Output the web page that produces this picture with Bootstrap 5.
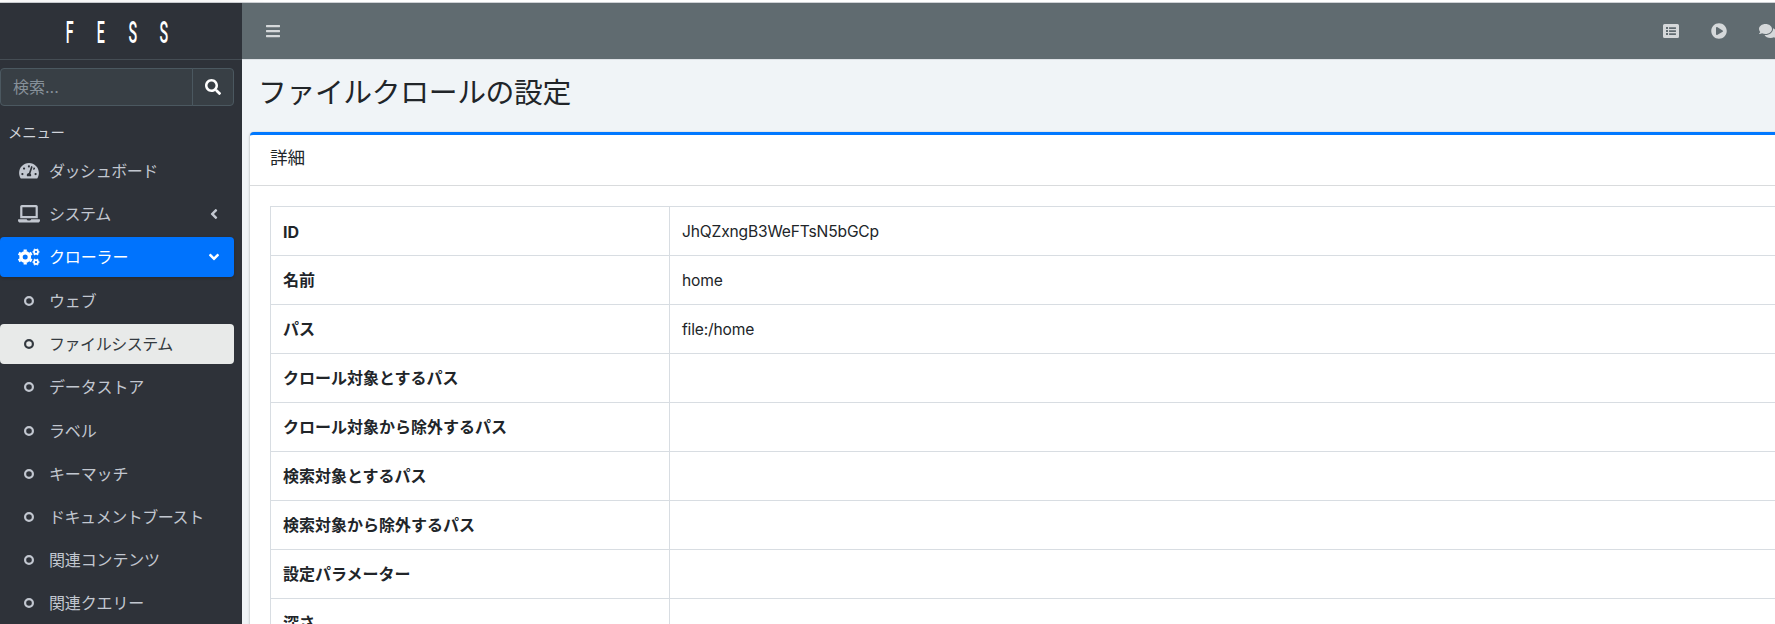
<!DOCTYPE html>
<html lang="ja">
<head>
<meta charset="utf-8">
<title>Fess</title>
<link rel="stylesheet" href="https://cdn.jsdelivr.net/npm/bootstrap@5.3.0/dist/css/bootstrap.min.css">
<style>
body{font-family:Inter,"Noto Sans CJK JP",sans-serif;font-size:16px;line-height:24px;color:#212529;background:#fff;overflow:hidden}
.app{height:624px;padding-top:2px;overflow:hidden}
.app-frame{border-top:1px solid #cfd2d6;height:622px}
.side{width:242px;background:#2e3239;color:#c2c7d0;flex:none;box-shadow:0 14px 28px rgba(0,0,0,.25)}
.brand-row{height:57px;border-bottom:1px solid #454d54;padding-left:53.5px;color:#fff}
.brand-row span{width:31.6px;text-align:center;font:500 31px/60px Roboto,sans-serif;transform:scaleX(.46)}
.search-box{width:234px;height:38px;margin-top:8px}
.search-box .form-control,.search-box .btn{background:#383f45;border-color:#4b5860;color:#fff;border-radius:4px}
.search-box .form-control{border-radius:4px 0 0 4px;padding:6px 12px}
.search-box .form-control::placeholder{color:#869099;opacity:1}
.search-box .btn{width:42px;padding:0;border-radius:0 4px 4px 0}
.menu-label{font-size:14.4px;letter-spacing:-.2px;padding:15px 8px 5.6px;color:#d0d4db}
.menu-list .nav-link{width:234px;height:40px;margin-bottom:3.2px;padding:8px 0 8px 16px;color:#c2c7d0;border-radius:4px;white-space:nowrap;letter-spacing:-.15px}
.menu-list .tight{letter-spacing:-.45px}
.menu-list .nav-link.active{background:#0073fd;color:#fff;box-shadow:0 1px 3px rgba(0,0,0,.2);margin-bottom:4px}
.menu-list .nav-link.picked{background:#e8eae9;color:#343a40}
.ico{width:25.6px;margin-right:7.4px;display:flex;justify-content:center;align-items:center}
.caret-ico{margin-right:16px}
.caret-open{transform:rotate(-90deg)}
svg{fill:currentColor;display:block}
.page{background:#f0f4f7;min-width:0}
.topbar{height:57px;background:#606b70;border-bottom:1px solid #dee2e6;color:#d5d8da;padding:0 0 0 24px}
.topbar .tools{width:112px;gap:32px}
h1{font-size:28.8px;line-height:34px;margin:15.5px 0 0 16px;font-weight:400;letter-spacing:-.35px}
.detail{margin:22.5px 0 0 8px;width:1644px;border:0;border-top:3px solid #0078ff;border-radius:4px;box-shadow:0 0 1px rgba(0,0,0,.2),0 1px 3px rgba(0,0,0,.25)}
.detail .card-header{background:#fff;border-bottom:1px solid #d9dbdd;height:51px;padding:11px 20px 9px;font-size:17.6px}
.detail .card-body{padding:20px}
.detail table{table-layout:fixed;width:1604px;border-color:#d8dde2;color:#212529}
.detail th,.detail td{padding:12px;height:49px}
.detail th{width:399px}
.detail .latin{padding-top:13px;padding-bottom:11px}
.detail td{font-size:15.6px;letter-spacing:-.17px}
</style>
</head>
<body>
<svg width="0" height="0" class="position-absolute">
<symbol id="angle" viewBox="0 0 256 512"><path d="M31.7 239l136-136c9.4-9.4 24.6-9.4 33.9 0l22.6 22.6c9.4 9.4 9.4 24.6 0 33.9L127.9 256l96.4 96.4c9.4 9.4 9.4 24.6 0 33.9L201.7 409c-9.4 9.4-24.6 9.4-33.9 0l-136-136c-9.5-9.4-9.5-24.6-.1-34z"/></symbol>
<symbol id="ring" viewBox="0 0 12 12"><circle cx="6" cy="6" r="3.9" fill="none" stroke="currentColor" stroke-width="2.2"/></symbol>
</svg>
<div class="app"><div class="app-frame d-flex">
<aside class="side">
  <div class="brand-row d-flex"><span>F</span><span>E</span><span>S</span><span>S</span></div>
  <div class="input-group search-box">
    <input class="form-control" placeholder="検索...">
    <button class="btn d-flex align-items-center justify-content-center"><svg width="16" height="16" viewBox="0 0 512 512"><path d="M505 442.7L405.3 343c-4.5-4.5-10.6-7-17-7H372c27.6-35.3 44-79.7 44-128C416 93.1 322.9 0 208 0S0 93.1 0 208s93.1 208 208 208c48.3 0 92.7-16.4 128-44v16.3c0 6.4 2.5 12.5 7 17l99.7 99.7c9.4 9.4 24.6 9.4 33.9 0l28.3-28.3c9.4-9.4 9.4-24.6.1-34zM208 336c-70.7 0-128-57.2-128-128 0-70.7 57.2-128 128-128 70.7 0 128 57.2 128 128 0 70.7-57.2 128-128 128z"/></svg></button>
  </div>
  <div class="menu-label">メニュー</div>
  <nav class="nav flex-column menu-list">
    <a class="nav-link tight d-flex align-items-center"><span class="ico"><svg width="20" height="17.6" viewBox="0 0 576 512"><path d="M288 32C128.94 32 0 160.94 0 320c0 52.8 14.25 102.26 39.06 144.8 5.61 9.62 16.3 15.2 27.44 15.2h443c11.14 0 21.83-5.58 27.44-15.2C561.75 422.26 576 372.8 576 320c0-159.06-128.94-288-288-288zm0 64c14.71 0 26.58 10.13 30.32 23.65-1.11 2.26-2.64 4.23-3.45 6.67l-9.22 27.67c-5.13 3.49-10.97 6.01-17.64 6.01-17.67 0-32-14.33-32-32S270.33 96 288 96zM96 384c-17.67 0-32-14.33-32-32s14.33-32 32-32 32 14.33 32 32-14.33 32-32 32zm48-160c-17.67 0-32-14.33-32-32s14.33-32 32-32 32 14.33 32 32-14.33 32-32 32zm246.77-72.41l-61.33 184C343.13 347.33 352 364.54 352 384c0 11.72-3.38 22.55-8.88 32H232.88c-5.5-9.45-8.88-20.28-8.88-32 0-33.94 26.5-61.43 59.9-63.59l61.34-184.01c4.17-12.56 17.73-19.45 30.36-15.17 12.57 4.19 19.35 17.79 15.17 30.36zm14.66 57.2l15.52-46.55c3.47-1.29 7.13-2.23 11.05-2.23 17.67 0 32 14.33 32 32s-14.33 32-32 32c-11.38-.01-20.89-6.28-26.57-15.22zM480 384c-17.67 0-32-14.33-32-32s14.33-32 32-32 32 14.33 32 32-14.33 32-32 32z"/></svg></span>ダッシュボード</a>
    <a class="nav-link tight d-flex align-items-center"><span class="ico"><svg width="22" height="17.6" viewBox="0 0 640 512"><path d="M624 416H381.54c-.74 19.81-14.71 32-32.74 32H288c-18.69 0-33.02-17.47-32.77-32H16c-8.8 0-16 7.2-16 16v16c0 35.2 28.8 64 64 64h512c35.2 0 64-28.8 64-64v-16c0-8.8-7.2-16-16-16zM576 48c0-26.4-21.6-48-48-48H112C85.6 0 64 21.6 64 48v336h512V48zm-64 272H128V64h384v256z"/></svg></span><span class="flex-grow-1">システム</span><svg class="caret-ico" width="8" height="16"><use href="#angle"/></svg></a>
    <a class="nav-link active d-flex align-items-center"><span class="ico"><svg width="22" height="18" viewBox="0 0 22 18" fill="none" stroke="currentColor">
      <g fill="none"><circle cx="7.2" cy="9" r="4.2" stroke-width="3.4"/><path stroke-width="3.2" d="M7.2 1.5v2M7.2 14.5v2M.7 5.25l1.8 1M11.9 11.75l1.8 1M.7 12.75l1.8-1M11.9 6.25l1.8-1"/>
      <circle cx="18" cy="3.9" r="2" stroke-width="1.7"/><path stroke-width="1.6" d="M14.6 3.9h1M20.4 3.9h1M16.2.8l.5.9M19.8.8l-.5.9M16.2 7l.5-.9M19.8 7l-.5-.9"/>
      <circle cx="18" cy="14.1" r="2" stroke-width="1.7"/><path stroke-width="1.6" d="M14.6 14.1h1M20.4 14.1h1M16.2 11l.5.9M19.8 11l-.5.9M16.2 17.2l.5-.9M19.8 17.2l-.5-.9"/></g></svg></span><span class="flex-grow-1">クローラー</span><svg class="caret-ico caret-open" width="8" height="16"><use href="#angle"/></svg></a>
    <a class="nav-link d-flex align-items-center"><span class="ico"><svg width="12" height="12"><use href="#ring"/></svg></span>ウェブ</a>
    <a class="nav-link picked tight d-flex align-items-center"><span class="ico"><svg width="12" height="12"><use href="#ring"/></svg></span>ファイルシステム</a>
    <a class="nav-link d-flex align-items-center"><span class="ico"><svg width="12" height="12"><use href="#ring"/></svg></span>データストア</a>
    <a class="nav-link d-flex align-items-center"><span class="ico"><svg width="12" height="12"><use href="#ring"/></svg></span>ラベル</a>
    <a class="nav-link d-flex align-items-center"><span class="ico"><svg width="12" height="12"><use href="#ring"/></svg></span>キーマッチ</a>
    <a class="nav-link tight d-flex align-items-center"><span class="ico"><svg width="12" height="12"><use href="#ring"/></svg></span>ドキュメントブースト</a>
    <a class="nav-link d-flex align-items-center"><span class="ico"><svg width="12" height="12"><use href="#ring"/></svg></span>関連コンテンツ</a>
    <a class="nav-link d-flex align-items-center"><span class="ico"><svg width="12" height="12"><use href="#ring"/></svg></span>関連クエリー</a>
  </nav>
</aside>
<main class="page flex-grow-1 overflow-hidden">
  <div class="topbar d-flex align-items-center justify-content-between">
    <svg width="14" height="16" viewBox="0 0 448 512"><path d="M16 132h416c8.8 0 16-7.2 16-16V76c0-8.8-7.2-16-16-16H16C7.2 60 0 67.2 0 76v40c0 8.8 7.2 16 16 16zm0 160h416c8.8 0 16-7.2 16-16v-40c0-8.8-7.2-16-16-16H16c-8.8 0-16 7.2-16 16v40c0 8.8 7.2 16 16 16zm0 160h416c8.8 0 16-7.2 16-16v-40c0-8.8-7.2-16-16-16H16c-8.8 0-16 7.2-16 16v40c0 8.8 7.2 16 16 16z"/></svg>
    <div class="tools d-flex overflow-hidden">
      <svg class="flex-shrink-0" width="16" height="16" viewBox="0 0 512 512"><path fill-rule="evenodd" d="M48 32h416a48 48 0 0 1 48 48v352a48 48 0 0 1-48 48H48a48 48 0 0 1-48-48V80a48 48 0 0 1 48-48zM96 128v64h64v-64zM96 224v64h64v-64zM96 320v64h64v-64zM204 132h200a12 12 0 0 1 12 12v32a12 12 0 0 1-12 12H204a12 12 0 0 1-12-12v-32a12 12 0 0 1 12-12zM204 228h200a12 12 0 0 1 12 12v32a12 12 0 0 1-12 12H204a12 12 0 0 1-12-12v-32a12 12 0 0 1 12-12zM204 324h200a12 12 0 0 1 12 12v32a12 12 0 0 1-12 12H204a12 12 0 0 1-12-12v-32a12 12 0 0 1 12-12z"/></svg>
      <svg class="flex-shrink-0" width="16" height="16" viewBox="0 0 512 512"><path d="M256 8C119 8 8 119 8 256s111 248 248 248 248-111 248-248S393 8 256 8zm115.7 272l-176 101c-15.8 8.8-35.7-2.5-35.7-21V152c0-18.4 19.8-29.8 35.7-21l176 107c16.4 9.2 16.4 32.9 0 42z"/></svg>
      <svg class="flex-shrink-0" width="18" height="16" viewBox="0 0 576 512"><path d="M416 192c0-88.4-93.1-160-208-160S0 103.6 0 192c0 34.3 14.1 65.9 38 92-13.4 30.2-35.5 54.2-35.8 54.5-2.2 2.3-2.8 5.7-1.5 8.7S4.8 352 8 352c36.6 0 66.9-12.3 88.7-25 32.2 15.7 70.3 25 111.3 25 114.9 0 208-71.6 208-160zm122 220c23.9-26 38-57.7 38-92 0-66.9-53.5-124.2-129.3-148.1.9 6.6 1.3 13.3 1.3 20.1 0 105.9-107.7 192-240 192-10.8 0-21.3-.8-31.7-1.9C207.8 439.6 281.8 480 368 480c41 0 79.1-9.2 111.3-25 21.8 12.7 52.1 25 88.7 25 3.2 0 6.1-1.9 7.3-4.8 1.3-2.9.7-6.3-1.5-8.7-.3-.3-22.4-24.2-35.8-54.5z"/></svg>
    </div>
  </div>
  <h1>ファイルクロールの設定</h1>
  <section class="card detail">
    <div class="card-header">詳細</div>
    <div class="card-body">
      <table class="table table-bordered mb-0"><tbody>
        <tr><th class="latin">ID</th><td class="latin">JhQZxngB3WeFTsN5bGCp</td></tr>
        <tr><th>名前</th><td class="latin">home</td></tr>
        <tr><th>パス</th><td class="latin">file:/home</td></tr>
        <tr><th>クロール対象とするパス</th><td></td></tr>
        <tr><th>クロール対象から除外するパス</th><td></td></tr>
        <tr><th>検索対象とするパス</th><td></td></tr>
        <tr><th>検索対象から除外するパス</th><td></td></tr>
        <tr><th>設定パラメーター</th><td></td></tr>
        <tr><th>深さ</th><td></td></tr>
      </tbody></table>
    </div>
  </section>
</main>
</div></div>
<script src="https://cdn.jsdelivr.net/npm/bootstrap@5.3.0/dist/js/bootstrap.bundle.min.js"></script>
</body>
</html>
